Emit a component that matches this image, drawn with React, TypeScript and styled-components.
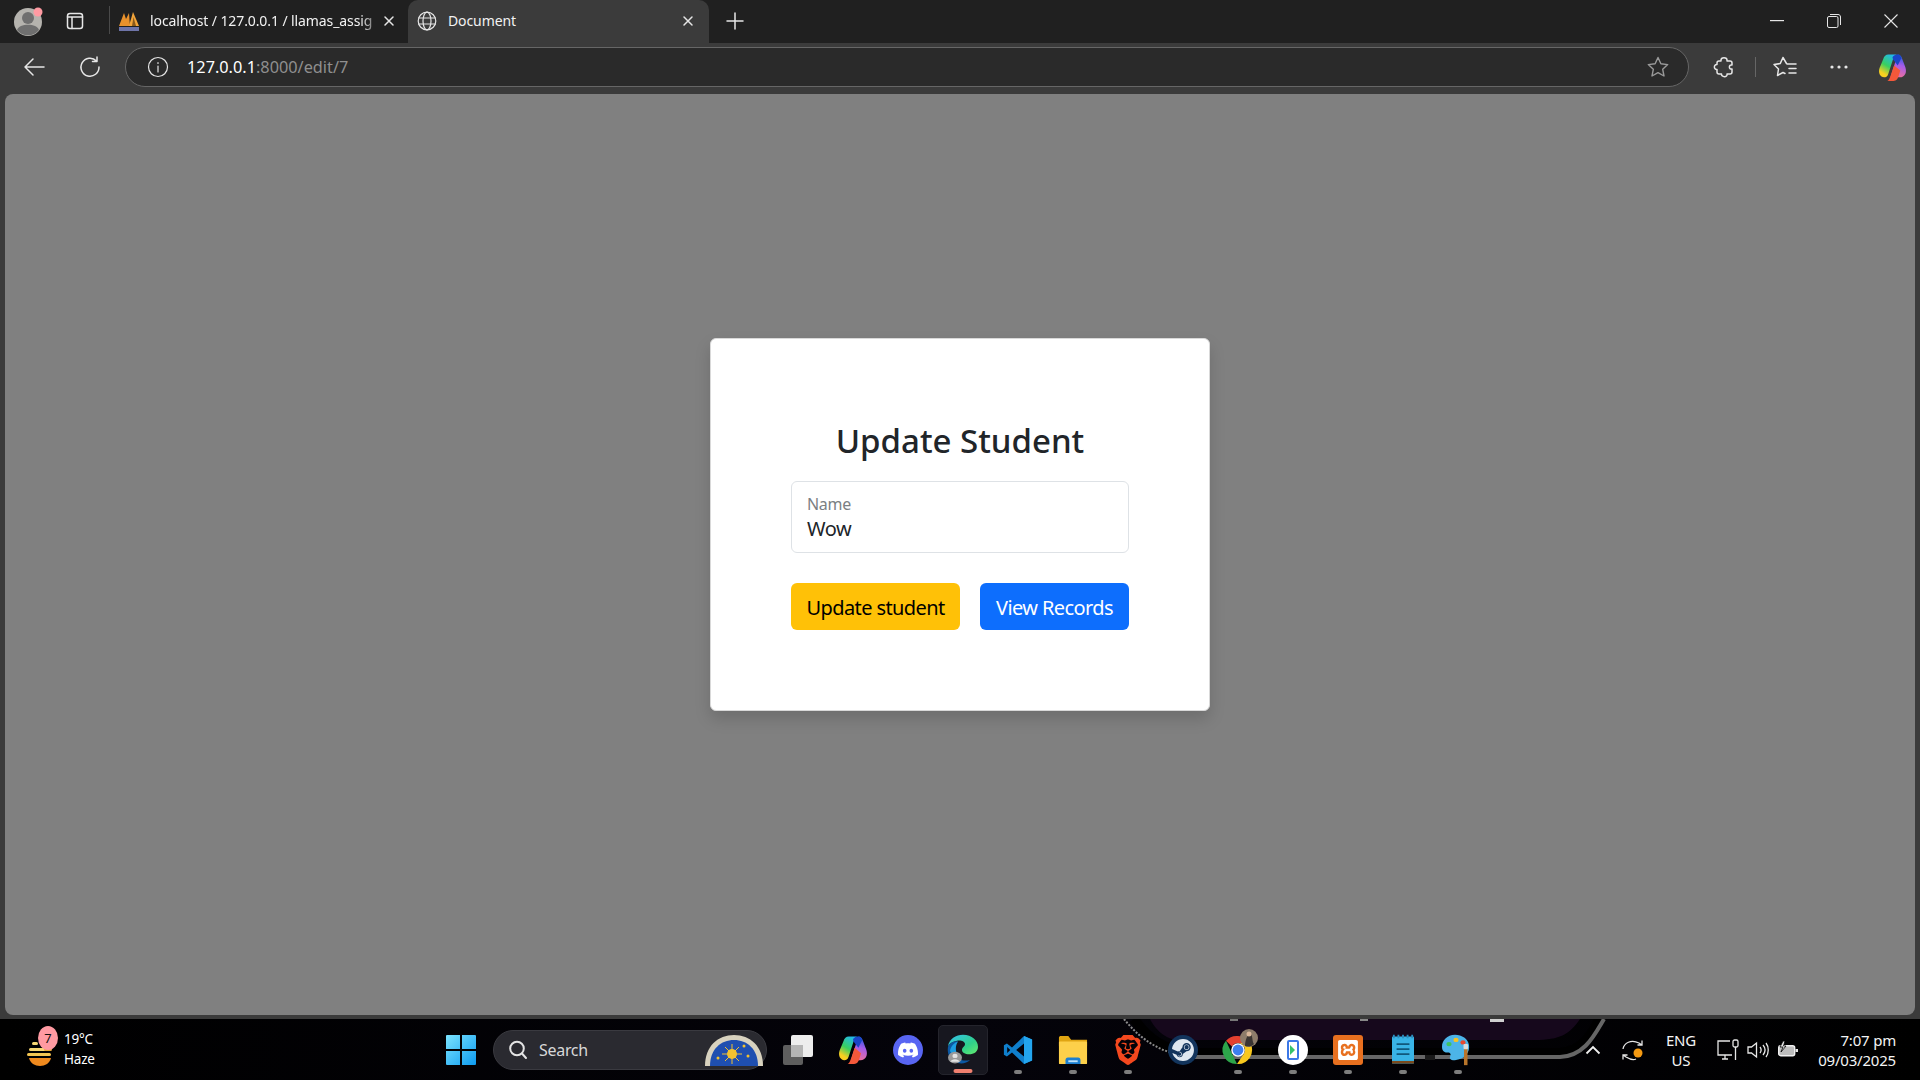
import React from "react";
import styled, { createGlobalStyle } from "styled-components";
import { SiBrave, SiDiscord, SiSteam, SiXampp } from "react-icons/si";

const GlobalStyle = createGlobalStyle`
    html, body {
        margin: 0;
        padding: 0;
        width: 1920px;
        height: 1080px;
        overflow: hidden;
        background: #000;
        font-family: "Noto Sans", "Open Sans", sans-serif;
    }
    * {
        box-sizing: border-box;
    }
`;

const Screen = styled.div`
    width: 1920px;
    height: 1080px;
    display: flex;
    flex-direction: column;
`;

/* browser chrome */

const TabStrip = styled.div`
    height: 43px;
    flex: none;
    display: flex;
    align-items: stretch;
    background: #202020;
    color: #fff;
`;

const StripButton = styled.div<{ $width: number }>`
    width: ${props => props.$width}px;
    flex: none;
    display: flex;
    align-items: center;
    justify-content: center;
    padding-bottom: 2px;
`;

const StripDivider = styled.div`
    width: 1px;
    height: 28px;
    margin: 6px 0 0 0;
    background: #4a4a4a;
    flex: none;
`;

const Tab = styled.div<{ $active?: boolean; $width: number }>`
    width: ${props => props.$width}px;
    flex: none;
    display: flex;
    align-items: center;
    padding: ${props => props.$active ? "0 15px 2px 9px" : "0 13px 2px 8px"};
    background: ${props => props.$active ? "#3b3b3b" : "transparent"};
    border-radius: ${props => props.$active ? "10px 10px 0 0" : "0"};
    font-size: 14px;
    letter-spacing: -0.1px;
    color: #f2f2f2;
`;

const TabTitle = styled.div<{ $fade?: boolean }>`
    flex: 1;
    margin-left: ${props => props.$fade ? 10 : 11}px;
    white-space: nowrap;
    ${props => props.$fade ? `
        -webkit-mask-image: linear-gradient(to right, #000 90%, transparent 100%);
        mask-image: linear-gradient(to right, #000 90%, transparent 100%);
    ` : ""}
`;

const Spacer = styled.div`
    flex: 1;
`;

const Toolbar = styled.div`
    height: 51px;
    flex: none;
    display: flex;
    align-items: center;
    background: #3b3b3b;
    padding: 0 0 3px 0;
`;

const ToolButton = styled.div<{ $width: number }>`
    width: ${props => props.$width}px;
    height: 40px;
    flex: none;
    display: flex;
    align-items: center;
    justify-content: center;
`;

const ToolDivider = styled.div`
    width: 1px;
    height: 20px;
    flex: none;
    background: #666;
`;

const AddressBar = styled.div`
    width: 1564px;
    height: 40px;
    flex: none;
    margin: 0 4px 0 13px;
    display: flex;
    align-items: center;
    background: #2a2a2a;
    border: 1px solid #666;
    border-radius: 20px;
    padding: 0 19px 0 21px;
`;

const UrlText = styled.div`
    margin-left: 18px;
    flex: 1;
    font-size: 16.3px;
    color: #8f8f8f;
    white-space: nowrap;
`;

const UrlHost = styled.span`
    color: #fff;
`;

/* page */

const PageFrame = styled.div`
    flex: 1;
    padding: 0 5px 4px 5px;
    background: #3b3b3b;
    display: flex;
    min-height: 0;
`;

const Backdrop = styled.div`
    flex: 1;
    background: #808080;
    border-radius: 8px;
    display: flex;
    justify-content: center;
    padding-top: 244px;
`;

const Card = styled.div`
    width: 500px;
    height: 373px;
    background: #fff;
    border: 1px solid #d9d9d9;
    border-radius: 6px;
    box-shadow: 0 8px 16px rgba(0, 0, 0, 0.15);
    padding: 79px 80px;
    display: flex;
    flex-direction: column;
    color: #212529;
`;

const Heading = styled.h2`
    margin: 0 0 18px 0;
    height: 45px;
    line-height: 45px;
    text-align: center;
    font-size: 33px;
    font-weight: 500;
`;

const FloatingField = styled.div`
    height: 72px;
    border: 1px solid #dee2e6;
    border-radius: 6px;
    padding: 11px 15px 0 15px;
    display: flex;
    flex-direction: column;
`;

const FieldLabel = styled.label`
    font-size: 16px;
    line-height: 22px;
    letter-spacing: -0.3px;
    color: #7b7f83;
`;

const FieldValue = styled.div`
    font-size: 20px;
    line-height: 28px;
    letter-spacing: -0.5px;
    color: #212529;
`;

const Actions = styled.div`
    margin-top: 30px;
    display: flex;
    justify-content: space-between;
`;

const ActionButton = styled.button<{ $bg: string; $fg: string; $width: number }>`
    width: ${props => props.$width}px;
    height: 47px;
    padding: 2px 0 0 0;
    border: none;
    border-radius: 6px;
    background: ${props => props.$bg};
    color: ${props => props.$fg};
    font-family: inherit;
    font-size: 20px;
    letter-spacing: -0.6px;
    line-height: 45px;
`;

/* taskbar */

const Taskbar = styled.div`
    position: relative;
    height: 61px;
    flex: none;
    display: flex;
    align-items: center;
    background: linear-gradient(to right, #000 0%, #04030a 50%, #000 100%);
    color: #fff;
`;

const Wallpaper = styled.svg`
    position: absolute;
    left: 1120px;
    top: 0;
    pointer-events: none;
`;

const Widget = styled.div`
    position: relative;
    width: 436px;
    height: 61px;
    flex: none;
    display: flex;
    align-items: center;
    padding-left: 26px;
`;

const WidgetBadge = styled.div`
    position: absolute;
    left: 38px;
    top: 7px;
    width: 20px;
    height: 24px;
    border-radius: 50%;
    background: #ff9aa2;
    color: #111;
    font-size: 13px;
    line-height: 24px;
    text-align: center;
`;

const WidgetText = styled.div`
    margin-left: 6px;
    display: flex;
    flex-direction: column;
    gap: 1px;
    font-size: 13.5px;
    line-height: 19px;
    letter-spacing: -0.2px;
`;

const StartButton = styled.div`
    width: 50px;
    flex: none;
    display: flex;
    align-items: center;
    justify-content: center;
`;

const SearchPill = styled.div`
    width: 274px;
    height: 40px;
    flex: none;
    margin: 0 6px 0 7px;
    display: flex;
    align-items: center;
    padding: 0 2px 0 14px;
    border-radius: 20px;
    background: #2a2a30;
    border: 1px solid #3a3a40;
    font-size: 16px;
    letter-spacing: -0.3px;
    color: #d8d8d8;
`;

const SearchLabel = styled.div`
    margin-left: 11px;
    flex: 1;
`;

const Dock = styled.div`
    display: flex;
    gap: 5px;
    position: relative;
`;

const DockItem = styled.div<{ $active?: boolean; $pin?: boolean }>`
    position: relative;
    width: 50px;
    height: 50px;
    display: flex;
    align-items: center;
    justify-content: center;
    border-radius: 5px;
    background: ${props => props.$active ? "#17171f" : "transparent"};
    ${props => props.$active ? "border: 1px solid #24242c;" : ""}
    &::after {
        content: ${props => (props.$pin || props.$active) ? '""' : "none"};
        position: absolute;
        bottom: 1px;
        left: 50%;
        transform: translateX(-50%);
        width: ${props => props.$active ? 19 : 8}px;
        height: 4px;
        border-radius: 2px;
        background: ${props => props.$active ? "#f0806f" : "#7d7d7d"};
    }
`;

const Tray = styled.div`
    position: relative;
    margin-left: auto;
    display: flex;
    align-items: center;
    padding-right: 24px;
`;

const TrayIcon = styled.div<{ $width: number }>`
    width: ${props => props.$width}px;
    flex: none;
    display: flex;
    align-items: center;
    justify-content: center;
`;

const TrayText = styled.div<{ $align: string; $width: number; $pull?: number }>`
    width: ${props => props.$width}px;
    flex: none;
    margin-left: ${props => props.$pull ?? 0}px;
    text-align: ${props => props.$align};
    font-size: 15px;
    line-height: 20px;
    letter-spacing: -0.2px;
    color: #f4f4f4;
    white-space: nowrap;
`;

const ic = { fill: "none", stroke: "#e6e6e6", strokeWidth: 1.5, strokeLinecap: "round", strokeLinejoin: "round" } as const;

const PmaLogo = () => (
    <svg width="22" height="22" viewBox="0 0 22 22">
        <path d="M1 16 L6 3 L8 9 L11 3 L12 16 Z" fill="#e8912c" />
        <path d="M11 16 L15 2 L21 16 Z" fill="#f2a43a" />
        <path d="M14 16 L15.5 7 L18 16 Z" fill="#8a5a1c" />
        <rect x="1" y="17" width="20" height="4" fill="#6e74a8" />
    </svg>
);

const Copilot = ({ size }: { size: number }) => (
    <svg width={size} height={size} viewBox="0 0 28 28">
        <defs>
            <linearGradient id={`cpA${size}`} x1="0.7" y1="0" x2="0.2" y2="1">
                <stop offset="0" stopColor="#22b8f0" />
                <stop offset="0.5" stopColor="#38d060" />
                <stop offset="0.85" stopColor="#f8d020" />
            </linearGradient>
            <linearGradient id={`cpB${size}`} x1="0.6" y1="0" x2="0.4" y2="1">
                <stop offset="0" stopColor="#1a5ae0" />
                <stop offset="0.45" stopColor="#a65ce8" />
                <stop offset="1" stopColor="#f07098" />
            </linearGradient>
        </defs>
        <path d="M19 1.500 C21.500 1.500 22.500 3 23.500 6 L26.500 14 C28 19 26 23.500 21 23.500 H12 Z" fill={`url(#cpB${size})`} />
        <path d="M10 1.500 H19 C16.500 1.500 15.500 3 14.500 6 L10 20 C9 23 7.500 23.500 6 23.500 C2 23.500 0 19 1.500 14.500 L5 6 C6 3 7.500 1.500 10 1.500 Z" fill={`url(#cpA${size})`} />
        <path d="M14 4 C15 2.500 17 1.500 19 1.500 C21 1.500 22 3 22.500 5 L19 12 L14.500 6 Z" fill="#1a45c8" />
        <path d="M9 27 H15 C18 27 19 25 20 22 L21.500 17 L15.500 12 L12.500 21 C11.500 24 10.500 26.500 9 27 Z" fill="#f4583a" />
    </svg>
);

const EdgeIcon = () => (
    <svg width="32" height="32" viewBox="0 0 32 38" preserveAspectRatio="none">
        <defs>
            <linearGradient id="edgeA" x1="0" y1="0" x2="1" y2="1">
                <stop offset="0" stopColor="#35c1f1" />
                <stop offset="0.6" stopColor="#2fd08a" />
                <stop offset="1" stopColor="#66eb6e" />
            </linearGradient>
        </defs>
        <path d="M1 15 C2 6 9 1 16 1 C25 1 31 8 31 15 C31 21 27 24 22 24 C18 24 15 22 15 19 C15 16 18 15 18 12 C18 9 14 7 10 8 C5 9 2 12 1 15 Z" fill="url(#edgeA)" />
        <path d="M1 15 C3 10 8 8 11 9 C7 12 6 18 8 24 C10 30 16 33 23 31 C19 36 12 36 7 33 C2 29 0 22 1 15 Z" fill="#0c59a4" />
        <path d="M3 20 C4 14 8 10 11 9 C8 14 8 22 12 27 C8 27 4 24 3 20 Z" fill="#1b9de2" />
        <circle cx="8" cy="28" r="7" fill="#9a9a9a" />
        <circle cx="8" cy="26" r="2.6" fill="#e4e4e4" />
        <path d="M3.5 33 C4 29 12 29 12.5 33 Z" fill="#e4e4e4" />
    </svg>
);

const VsCode = () => (
    <svg width="30" height="30" viewBox="0 0 100 100">
        <path d="M70 3 L97 15 V85 L70 97 L30 58 L13 72 L3 66 V34 L13 28 L30 42 Z M70 28 L44 50 L70 72 Z M14 40 V60 L24 50 Z" fill="#0f7fcc" fillRule="evenodd" />
        <path d="M70 3 L97 15 V85 L70 97 Z" fill="#23a5ee" />
    </svg>
);

const FilesIcon = () => (
    <svg width="30" height="30" viewBox="0 0 30 32">
        <path d="M0 3 C0 1.500 1 1 2 1 H10 L13 5 H30 V12 H0 Z" fill="#e0a512" />
        <rect x="0" y="7" width="30" height="24" rx="1" fill="#fdd04a" />
        <path d="M7 27 C7 25 8 24 9.500 24 H20.500 C22 24 23 25 23 27 V31 H7 Z" fill="#1c7fd0" />
        <rect x="10" y="27" width="10" height="2" fill="#bfe2fb" />
    </svg>
);

const ChromeIcon = () => (
    <svg width="30" height="30" viewBox="0 0 30 30" overflow="visible">
        <path d="M15 1 A14 14 0 0 1 27.100 8 H15 A7 7 0 0 0 8.900 11.500 L3 5.800 A14 14 0 0 1 15 1 Z" fill="#e3402f" />
        <path d="M3 5.800 L8.900 18.500 L14 29 A14 14 0 0 1 3 5.800 Z" fill="#2da54a" />
        <path d="M27.100 8 A14 14 0 0 1 14 29 L21 18.500 A7 7 0 0 0 15 8 Z" fill="#f8c81e" />
        <circle cx="15" cy="15" r="6.800" fill="#fff" />
        <circle cx="15" cy="15" r="5.400" fill="#3d7fee" />
        <circle cx="26" cy="3" r="9" fill="#8d7c6a" />
        <path d="M22 11 C22 6 24 0 27 -2 C30 0 29 7 31 9 C28 12 25 12 22 11 Z" fill="#3a3532" />
        <circle cx="26" cy="-1" r="2.500" fill="#d9b79a" />
    </svg>
);

const PaintIcon = () => (
    <svg width="32" height="32" viewBox="0 0 32 38" preserveAspectRatio="none">
        <path d="M13 1 C5 1 0 8 0 15 C0 21 3 22 6 22 C9 22 9 25 8 27 C7 30 10 32 14 31 C23 29 28 22 27 13 C26 6 20 1 13 1 Z" fill="#4cb4e8" />
        <circle cx="7" cy="12" r="2.600" fill="#3ec45c" />
        <circle cx="14" cy="7" r="2.600" fill="#f6c324" />
        <circle cx="21" cy="10" r="2.600" fill="#e8492f" />
        <rect x="22" y="16" width="3.500" height="21" fill="#b8742a" />
        <rect x="21.500" y="12" width="4.500" height="6" rx="1" fill="#dcdcdc" />
    </svg>
);

const NotepadIcon = () => (
    <svg width="22" height="32" viewBox="0 0 24 38" preserveAspectRatio="none">
        <rect x="0" y="3" width="24" height="32" rx="1" fill="#39b4e6" />
        <rect x="0" y="32" width="24" height="3" fill="#7a4a1e" />
        <path d="M2 1 V5 M7 1 V5 M12 1 V5 M17 1 V5 M22 1 V5" stroke="#2b8fc0" strokeWidth="2" />
        <path d="M5 12 H19 M5 18 H19 M5 24 H19" stroke="#10587c" strokeWidth="2" />
    </svg>
);

const App: React.FC = () => {
    return (
        <Screen>
            <GlobalStyle />
            <TabStrip>
                <StripButton $width={56}>
                    <svg width="32" height="32" viewBox="0 0 32 32">
                        <circle cx="16" cy="17" r="14" fill="#b5b3ae" />
                        <circle cx="16" cy="13" r="6" fill="#6f6f6f" />
                        <path d="M5 25 C7 18 25 18 27 25 C22 32 10 32 5 25 Z" fill="#6f6f6f" />
                        <circle cx="26" cy="7" r="4.500" fill="#ff9aa2" />
                    </svg>
                </StripButton>
                <StripButton $width={38}>
                    <svg width="18" height="18" viewBox="0 0 18 18" {...ic}>
                        <rect x="1.500" y="1.500" width="15" height="15" rx="2.500" />
                        <path d="M1.500 5 H16.500 M6 5 V16.500" />
                    </svg>
                </StripButton>
                <StripButton $width={15} />
                <StripDivider />
                <Tab $width={298}>
                    <PmaLogo />
                    <TabTitle $fade>localhost / 127.0.0.1 / llamas_assig</TabTitle>
                    <svg width="12" height="12" viewBox="0 0 12 12" {...ic}>
                        <path d="M2 2 L10 10 M10 2 L2 10" />
                    </svg>
                </Tab>
                <Tab $active $width={301}>
                    <svg width="20" height="20" viewBox="0 0 20 20" {...ic} strokeWidth={1.2}>
                        <circle cx="10" cy="10" r="8.800" />
                        <ellipse cx="10" cy="10" rx="4" ry="8.800" />
                        <path d="M1.500 7 H18.500 M1.500 13 H18.500" />
                    </svg>
                    <TabTitle>Document</TabTitle>
                    <svg width="12" height="12" viewBox="0 0 12 12" {...ic}>
                        <path d="M2 2 L10 10 M10 2 L2 10" />
                    </svg>
                </Tab>
                <StripButton $width={52}>
                    <svg width="18" height="18" viewBox="0 0 18 18" {...ic}>
                        <path d="M9 1 V17 M1 9 H17" />
                    </svg>
                </StripButton>
                <Spacer />
                <StripButton $width={57}>
                    <svg width="14" height="2" viewBox="0 0 14 2">
                        <rect width="14" height="1.200" fill="#e6e6e6" />
                    </svg>
                </StripButton>
                <StripButton $width={57}>
                    <svg width="14" height="14" viewBox="0 0 14 14" fill="none" stroke="#e6e6e6" strokeWidth="1">
                        <rect x="0.500" y="2.500" width="10.500" height="11" rx="1.500" />
                        <path d="M3 0.500 H11 C12.500 0.500 13.500 1.500 13.500 3 V11" />
                    </svg>
                </StripButton>
                <StripButton $width={58}>
                    <svg width="14" height="14" viewBox="0 0 14 14" fill="none" stroke="#e6e6e6" strokeWidth="1.100">
                        <path d="M0.500 0.500 L13.500 13.500 M13.500 0.500 L0.500 13.500" />
                    </svg>
                </StripButton>
            </TabStrip>

            <Toolbar>
                <ToolButton $width={68}>
                    <svg width="22" height="20" viewBox="0 0 22 20" {...ic}>
                        <path d="M21 10 H2 M10 2 L2 10 L10 18" />
                    </svg>
                </ToolButton>
                <ToolButton $width={44}>
                    <svg width="22" height="22" viewBox="0 0 22 22" {...ic}>
                        <path d="M17.500 5 A9 9 0 1 0 20 11 M18 1 V5.500 H13.500" />
                    </svg>
                </ToolButton>
                <AddressBar>
                    <svg width="22" height="22" viewBox="0 0 22 22" {...ic} strokeWidth={1.2}>
                        <circle cx="11" cy="11" r="9.500" />
                        <path d="M11 10 V16 M11 6.500 V7.500" />
                    </svg>
                    <UrlText>
                        <UrlHost>127.0.0.1</UrlHost>:8000/edit/7
                    </UrlText>
                    <svg width="22" height="22" viewBox="0 0 22 22" fill="none" stroke="#9a9a9a" strokeWidth="1.400" strokeLinejoin="round">
                        <path d="M11 1.500 L13.900 7.800 L20.700 8.600 L15.700 13.300 L17 20 L11 16.700 L5 20 L6.300 13.300 L1.300 8.600 L8.100 7.800 Z" />
                    </svg>
                </AddressBar>
                <ToolButton $width={62}>
                    <svg width="22" height="22" viewBox="0 0 22 22" {...ic}>
                        <path d="M8 4 C8 1 14 1 14 4 V5 H17 C18.500 5 19 6 19 7 V9 C15.500 8 15.500 14 19 13 V16 C19 17.500 18 18 17 18 H14 C15 21.500 8 21.500 8.500 18 H6 C5 18 4 17 4 16 V13.500 C0.500 14 0.500 8 4 8.500 V7 C4 6 5 5 6 5 H8 Z" />
                    </svg>
                </ToolButton>
                <ToolDivider />
                <ToolButton $width={58}>
                    <svg width="24" height="22" viewBox="0 0 24 22" {...ic}>
                        <path d="M13.500 7.500 L10 1.500 L7.200 7.600 L1 8.500 L5.500 13 L4.500 19.500 L10 16.500 L12 17.500 M14 8 H23 M16 12.500 H23 M16 17 H23" />
                    </svg>
                </ToolButton>
                <ToolButton $width={50}>
                    <svg width="20" height="4" viewBox="0 0 20 4" fill="#e6e6e6">
                        <circle cx="3" cy="2" r="1.600" />
                        <circle cx="10" cy="2" r="1.600" />
                        <circle cx="17" cy="2" r="1.600" />
                    </svg>
                </ToolButton>
                <ToolButton $width={56}>
                    <Copilot size={29} />
                </ToolButton>
            </Toolbar>

            <PageFrame>
                <Backdrop>
                    <Card>
                        <Heading>Update Student</Heading>
                        <FloatingField>
                            <FieldLabel>Name</FieldLabel>
                            <FieldValue>Wow</FieldValue>
                        </FloatingField>
                        <Actions>
                            <ActionButton $bg="#ffc107" $fg="#000" $width={169}>Update student</ActionButton>
                            <ActionButton $bg="#0d6efd" $fg="#fff" $width={149}>View Records</ActionButton>
                        </Actions>
                    </Card>
                </Backdrop>
            </PageFrame>

            <Taskbar>
                <Wallpaper width="500" height="61" viewBox="0 0 500 61">
                    <path d="M30 0 H460 C450 15 440 21 415 21 H60 C45 21 35 10 30 0 Z" fill="#16081c" />
                    <path d="M14 0 C28 20 45 32 72 34 H440 C462 33 472 15 480 0" fill="none" stroke="#000" strokeWidth="10" />
                    <path d="M75 38 H440 C465 37 475 15 484 0" fill="none" stroke="#666" strokeWidth="4" />
                    <path d="M4 0 C20 20 40 34 70 38" fill="none" stroke="#8a8a8a" strokeWidth="2" strokeDasharray="2 1.500" />
                    <rect x="305" y="36" width="10" height="5" fill="#1a1a1a" />
                    <rect x="110" y="0" width="8" height="2" fill="#777" />
                    <rect x="240" y="0" width="8" height="2" fill="#888" />
                    <rect x="370" y="0" width="14" height="3" fill="#d0d0d0" />
                </Wallpaper>
                <Widget>
                    <svg width="32" height="34" viewBox="0 0 32 34">
                        <rect x="6" y="9" width="6" height="3" rx="1.500" fill="#f7d774" />
                        <rect x="3" y="15" width="17" height="3" rx="1.500" fill="#f7d774" />
                        <rect x="1" y="20" width="24" height="3" rx="1.500" fill="#f3c552" />
                        <rect x="18" y="15" width="8" height="3" rx="1.500" fill="#e8a93a" />
                        <path d="M3 25 H25 C24 30 19 33 14 33 C9 33 4 30 3 25 Z" fill="#f08a1e" />
                    </svg>
                    <WidgetBadge>7</WidgetBadge>
                    <WidgetText>
                        <span>19°C</span>
                        <span>Haze</span>
                    </WidgetText>
                </Widget>
                <StartButton>
                    <svg width="30" height="30" viewBox="0 0 30 30">
                        <defs>
                            <linearGradient id="winLogo" x1="0" y1="0" x2="1" y2="1">
                                <stop offset="0" stopColor="#7ce4ff" />
                                <stop offset="1" stopColor="#0d9bf0" />
                            </linearGradient>
                        </defs>
                        <path d="M0 1 A1 1 0 0 1 1 0 H14 V14 H0 Z M16 0 H29 A1 1 0 0 1 30 1 V14 H16 Z M0 16 H14 V30 H1 A1 1 0 0 1 0 29 Z M16 16 H30 V29 A1 1 0 0 1 29 30 H16 Z" fill="url(#winLogo)" />
                    </svg>
                </StartButton>
                <SearchPill>
                    <svg width="20" height="20" viewBox="0 0 20 20" fill="none" stroke="#e4e4e4" strokeWidth="2" strokeLinecap="round">
                        <circle cx="9" cy="8.500" r="6.800" />
                        <path d="M14 13.500 L18 18" />
                    </svg>
                    <SearchLabel>Search</SearchLabel>
                    <svg width="60" height="32" viewBox="0 0 60 32">
                        <path d="M1 32 C1 12 14 1 30 1 C46 1 59 12 59 32 Z" fill="#d8d2bf" />
                        <path d="M6 32 C6 15 17 6 30 6 C43 6 54 15 54 32 Z" fill="#1f4fb0" />
                        <circle cx="28" cy="20" r="5" fill="#f2c230" />
                        <path d="M28 10 V30 M18 20 H38 M21 13 L35 27 M35 13 L21 27" stroke="#f2c230" strokeWidth="1" />
                        <circle cx="14" cy="24" r="1.500" fill="#f2c230" />
                        <circle cx="44" cy="22" r="1.500" fill="#f2c230" />
                        <circle cx="40" cy="12" r="1.500" fill="#f2c230" />
                    </svg>
                </SearchPill>
                <Dock>
                    <DockItem>
                        <svg width="30" height="30" viewBox="0 0 30 30">
                            <rect x="0" y="10" width="20" height="20" rx="2" fill="#5e5e5e" />
                            <rect x="8" y="0" width="22" height="22" rx="2" fill="#ededed" />
                            <rect x="8" y="10" width="12" height="12" fill="#b5b5b5" />
                        </svg>
                    </DockItem>
                    <DockItem>
                        <Copilot size={30} />
                    </DockItem>
                    <DockItem>
                        <svg width="30" height="30" viewBox="0 0 30 30">
                            <circle cx="15" cy="15" r="15" fill="#5865f2" />
                            <SiDiscord x="5" y="5" size={20} color="#fff" />
                        </svg>
                    </DockItem>
                    <DockItem $active>
                        <EdgeIcon />
                    </DockItem>
                    <DockItem $pin>
                        <VsCode />
                    </DockItem>
                    <DockItem $pin>
                        <FilesIcon />
                    </DockItem>
                    <DockItem $pin>
                        <SiBrave size={30} color="#f4481e" />
                    </DockItem>
                    <DockItem>
                        <svg width="30" height="30" viewBox="0 0 30 30">
                            <circle cx="15" cy="15" r="15" fill="#12345c" />
                            <SiSteam x="4" y="4" size={22} color="#dfe8f0" />
                        </svg>
                    </DockItem>
                    <DockItem $pin>
                        <ChromeIcon />
                    </DockItem>
                    <DockItem $pin>
                        <svg width="30" height="30" viewBox="0 0 30 30">
                            <circle cx="15" cy="15" r="15" fill="#fff" />
                            <rect x="10" y="6" width="10" height="18" rx="1" fill="none" stroke="#3b78e7" strokeWidth="2" />
                            <path d="M12 10 L17 15 L12 20 Z" fill="#35c26a" />
                        </svg>
                    </DockItem>
                    <DockItem $pin>
                        <svg width="30" height="30" viewBox="0 0 30 30">
                            <rect width="30" height="30" rx="3" fill="#e8701f" />
                            <SiXampp x="5" y="5" size={20} color="#fff" />
                        </svg>
                    </DockItem>
                    <DockItem $pin>
                        <NotepadIcon />
                    </DockItem>
                    <DockItem $pin>
                        <PaintIcon />
                    </DockItem>
                </Dock>
                <Tray>
                    <TrayIcon $width={40}>
                        <svg width="16" height="10" viewBox="0 0 16 10" fill="none" stroke="#f0f0f0" strokeWidth="1.800">
                            <path d="M1.500 8.500 L8 2 L14.500 8.500" />
                        </svg>
                    </TrayIcon>
                    <TrayIcon $width={40}>
                        <svg width="24" height="24" viewBox="0 0 24 24" fill="none" stroke="#e6e6e6" strokeWidth="1.300">
                            <path d="M2 11 C3 5 10 1 18 5 L21 7 M21 2.500 V7 H16.500 M2 17 L5 19 C10 22 13 22 15 21 M2 21.500 V17 H6.500" />
                            <circle cx="17" cy="15" r="4.500" fill="#f59a12" stroke="none" />
                        </svg>
                    </TrayIcon>
                    <TrayText $align="center" $width={56}>ENG<br />US</TrayText>
                    <TrayIcon $width={38}>
                        <svg width="22" height="22" viewBox="0 0 22 22" fill="none" stroke="#e6e6e6" strokeWidth="1.300">
                            <path d="M13 2 H1 V16 H15 M5 20 H11 M8 16 V20" />
                            <rect x="16" y="1" width="5" height="7" rx="1.500" />
                            <path d="M18.500 8 V21" />
                        </svg>
                    </TrayIcon>
                    <TrayIcon $width={22}>
                        <svg width="22" height="18" viewBox="0 0 22 18" fill="none" stroke="#e6e6e6" strokeWidth="1.300">
                            <path d="M1 6 H4.500 L9.500 2 V16 L4.500 12 H1 Z M13 6 C14.500 8 14.500 10 13 12 M16 4 C18.500 7 18.500 11 16 14 M19 2 C22 6 22 12 19 16" />
                        </svg>
                    </TrayIcon>
                    <TrayIcon $width={38}>
                        <svg width="22" height="18" viewBox="0 0 22 18">
                            <rect x="1.700" y="4.700" width="16" height="10" rx="2" fill="#bdbdbd" stroke="#f0f0f0" strokeWidth="1.400" />
                            <rect x="18.500" y="8" width="2.500" height="3" fill="#e6e6e6" />
                            <path d="M6 0 L3 6 H6 L4 11 L9 5 H6.500 L8 0 Z" fill="#e6e6e6" stroke="#000" strokeWidth="0.800" />
                        </svg>
                    </TrayIcon>
                    <TrayText $align="right" $width={95} $pull={-6}>7:07 pm<br />09/03/2025</TrayText>
                </Tray>
            </Taskbar>
        </Screen>
    );
};

export default App;
